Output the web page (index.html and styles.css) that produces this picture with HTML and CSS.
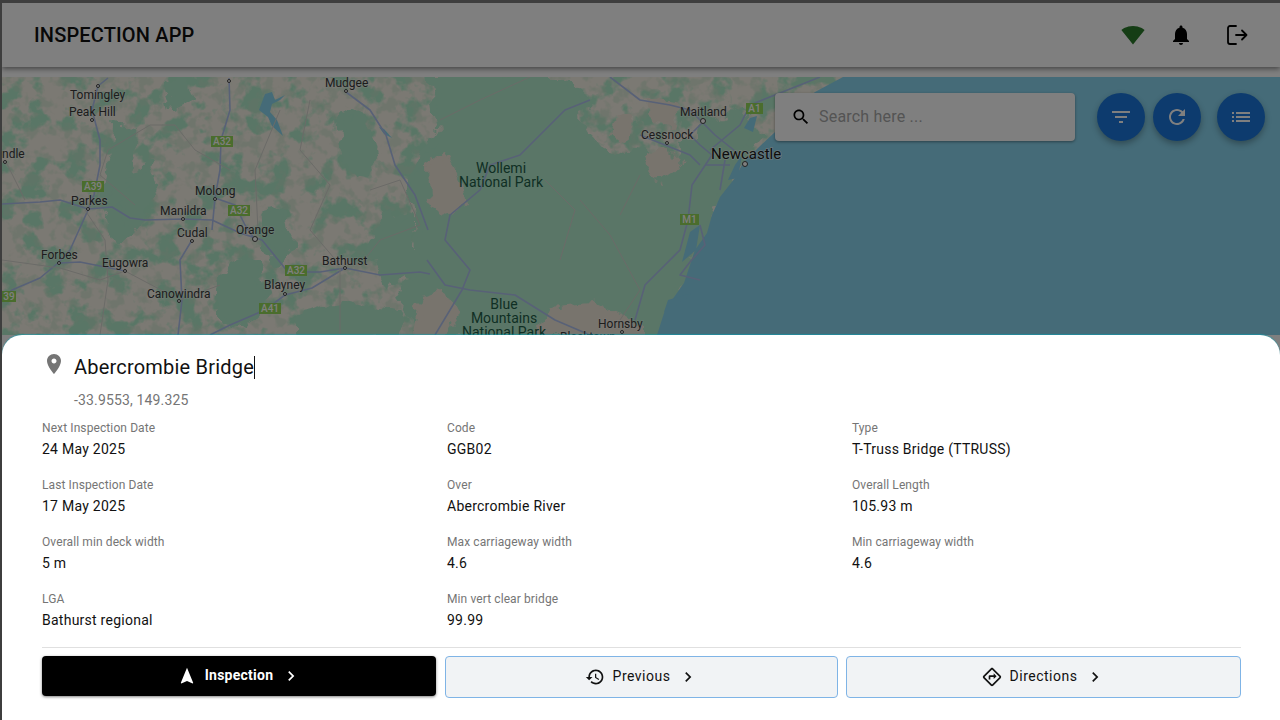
FILE: index.html
```html
<!DOCTYPE html>
<html lang="en">
<head>
    <meta charset="UTF-8">
    <meta name="viewport" content="width=device-width, initial-scale=1.0">
    <title>Inspection App</title>
    <link rel="stylesheet" href="styles.css">
</head>
<body>
<div class="app">
    <header class="topbar">
        <div class="brand">INSPECTION APP</div>
        <div class="topbar-icons">
            <svg class="icon-wifi" viewBox="0 0 24 24"><path d="M12.01 21.49L23.64 7c-.45-.34-4.93-4-11.64-4C5.28 3 .81 6.66.36 7l11.63 14.49.01.01.01-.01z"/></svg>
            <svg class="icon-bell" viewBox="0 0 24 24"><path d="M12 22c1.1 0 2-.9 2-2h-4c0 1.1.89 2 2 2zm6-6v-5c0-3.07-1.64-5.64-4.5-6.32V4c0-.83-.67-1.5-1.5-1.5s-1.5.67-1.5 1.5v.68C7.63 5.36 6 7.92 6 11v5l-2 2v1h16v-1l-2-2z"/></svg>
            <svg class="icon-logout" viewBox="0 0 24 24"><path d="M11 3H5a2 2 0 0 0-2 2v14a2 2 0 0 0 2 2h6"/><path d="M11 12h10.500M17 7.500l4.500 4.500-4.500 4.500"/></svg>
        </div>
    </header>

    <main class="map">
        <svg class="map-canvas" viewBox="2 77 1278 258" width="1278" height="258">
            <defs>
                <!-- patchy vegetation and wobbly edges -->
                <filter id="patches" x="0" y="0" width="100%" height="100%" color-interpolation-filters="sRGB">
                    <feTurbulence type="fractalNoise" baseFrequency="0.045" numOctaves="4" seed="11"/>
                    <feColorMatrix type="matrix" values="0 0 0 0 0.70  0 0 0 0 0.93  0 0 0 0 0.80  7 0 0 0 -3.5"/>
                </filter>
                <filter id="patches-fine" x="0" y="0" width="100%" height="100%" color-interpolation-filters="sRGB">
                    <feTurbulence type="fractalNoise" baseFrequency="0.08" numOctaves="3" seed="23"/>
                    <feColorMatrix type="matrix" values="0 0 0 0 0.78  0 0 0 0 0.90  0 0 0 0 0.80  6 0 0 0 -3"/>
                </filter>
                <filter id="wobble" x="-5%" y="-5%" width="110%" height="110%">
                    <feTurbulence type="fractalNoise" baseFrequency="0.06" numOctaves="3" seed="4" result="n"/>
                    <feDisplacementMap in="SourceGraphic" in2="n" scale="20" xChannelSelector="R" yChannelSelector="G"/>
                </filter>
            </defs>

            <rect x="2" y="77" width="1278" height="258" fill="#f7f2e6"/>
            <rect x="2" y="77" width="860" height="258" filter="url(#patches)"/>
            <rect x="2" y="77" width="860" height="258" filter="url(#patches-fine)" opacity="0.5"/>

            <!-- forest -->
            <g class="forest" filter="url(#wobble)">
                <path d="M432 77L560 77 590 100 575 118 610 160 640 150 660 180 700 130 740 110 760 135 735 165 718 200 700 240 680 285 657 335 430 335 400 300 420 240 410 180 440 130z"/>
                <path d="M115 125L135 130 128 190 135 225 118 240 105 200 112 160z"/>
                <path d="M128 172L150 168 155 190 140 215 130 235 122 205z"/>
                <path d="M262 215L285 210 290 250 275 265 262 240z"/>
                <path d="M340 110L365 120 375 160 360 175 345 160z"/>
                <path d="M385 215L410 220 410 270 385 285 370 250z"/>
                <path d="M230 265L255 260 265 295 245 325 220 315 220 285z"/>
                <path d="M300 315L350 305 400 315 395 335 300 335z"/>
                <path d="M165 85L186 80 190 100 172 108z"/>
            </g>
            <!-- bare land patches inside the park -->
            <g class="land" filter="url(#wobble)">
                <path d="M428 165L445 155 462 190 465 205 440 215 430 195z"/>
                <path d="M645 160L665 150 680 165 665 178 655 175z"/>
                <path d="M615 120L630 115 625 140 612 135z"/>
                <path d="M650 100L675 105 670 128 652 122z"/>
                <path d="M420 300L445 295 455 315 440 335 415 335z"/>
                <path d="M550 310L600 305 640 325 640 335 540 335z"/>
                <path d="M690 270L712 255 700 300 680 315z"/>
            </g>

            <!-- sea -->
            <path class="sea" d="M843 77L815 92 790 112 775 132 758 148 743 163 735 178 720 197 712 215 707 233 695 250 684 283 665 310 657 335 1280 335 1280 77z"/>
            <path class="sea" d="M690 232L700 225 696 250 682 262zM735 165L742 155 738 178 728 180zM750 118L757 116 753 132 744 128zM695 292L668 300 664 312 672 308z"/>
            <path class="sea" d="M265 94L272 92 275 100 285 95 280 100 272 104 270 112 277 120 283 136 272 126 268 117 259 110z"/>
            <path class="sea" d="M379 127L384 129 392 138 384 134z"/>

            <!-- roads -->
            <g class="roads">
                <path d="M108 78L98 86 92 110 100 140 100 165 94 195 88 210 70 250 58 263 40 278 12 290 2 298"/>
                <path d="M2 204L40 202 60 200 88 209 112 207 130 218 145 220 183 219 212 220 240 233 262 240 288 272 320 272 345 268 380 275 420 272 430 274"/>
                <path d="M229 78L230 110 221 140 220 170 215 198 212 230"/>
                <path d="M215 198L235 205 245 225 255 240"/>
                <path d="M346 92L370 110 386 135 395 165 415 195 428 230"/>
                <path d="M345 268L312 288 285 295 265 310 230 325 210 335"/>
                <path d="M192 240L180 260 182 300 178 335"/>
                <path d="M60 263L80 262 125 271"/>
                <path d="M610 77L640 100 670 105 690 110 715 135 740 155"/>
                <path d="M590 100L565 110 545 130 520 155 490 165 480 190 450 215 445 240 470 270 462 290 435 335"/>
                <path d="M427 260L445 285 470 290 515 295 555 320 590 335"/>
                <path d="M705 120L690 135 700 145 712 155M640 135L690 155 700 165"/>
                <path d="M712 155L692 185 688 220 680 250 665 265 645 285 635 320"/>
                <path d="M710 150L740 125 750 105 800 85 820 77"/>
                <path d="M705 165L730 165M725 160L720 190M700 225L705 245 690 262 680 275 700 280"/>
            </g>
            <g class="roads-thin">
                <path d="M135 205L100 175 108 150 150 125 175 125 195 150 230 170"/>
                <path d="M2 260L60 268 100 280 125 271 180 300 220 285"/>
                <path d="M310 100L300 150 330 185 310 230 340 265M280 110L255 170 258 230"/>
                <path d="M370 190L400 180 420 225 380 240 360 265"/>
                <path d="M580 200L610 235 640 290 620 320M545 180L575 210 560 260"/>
                <path d="M530 77L480 100 440 120M640 175L620 215"/>
                <path d="M5 160L25 200M85 210L105 240 108 280 100 335M340 268L340 335"/>
            </g>

            <!-- town dots -->
            <g class="dots">
                <circle cx="98" cy="86" r="1.500"/><circle cx="229" cy="81" r="1.500"/><circle cx="346" cy="91" r="1.500"/>
                <circle cx="92" cy="120" r="1.500"/><circle cx="5" cy="162" r="1.500"/><circle cx="88" cy="209" r="1.500"/>
                <circle cx="215" cy="199" r="1.500"/><circle cx="183" cy="219" r="1.500"/><circle cx="192" cy="241" r="1.500"/>
                <circle cx="255" cy="239" r="2.500"/><circle cx="59" cy="263" r="1.500"/><circle cx="125" cy="271" r="1.500"/>
                <circle cx="179" cy="301" r="1.500"/><circle cx="345" cy="268" r="1.500"/><circle cx="285" cy="294" r="1.500"/>
                <circle cx="703" cy="121" r="2.500"/><circle cx="667" cy="143" r="1.500"/><circle cx="745" cy="164" r="2.500"/>
                <circle cx="622" cy="332" r="1.500"/>
            </g>

            <!-- route shields -->
            <g class="shields">
                <g><rect x="211" y="136" width="22" height="11"/><text x="222" y="145">A32</text></g>
                <g><rect x="82" y="181" width="22" height="11"/><text x="93" y="190">A39</text></g>
                <g><rect x="228" y="205" width="22" height="11"/><text x="239" y="214">A32</text></g>
                <g><rect x="285" y="265" width="22" height="11"/><text x="296" y="274">A32</text></g>
                <g><rect x="259" y="303" width="22" height="11"/><text x="270" y="312">A41</text></g>
                <g><rect x="2" y="291" width="14" height="11"/><text x="9" y="300">39</text></g>
                <g><rect x="746" y="103" width="17" height="11"/><text x="754.500" y="112">A1</text></g>
                <g><rect x="680" y="214" width="19" height="11"/><text x="689.500" y="223">M1</text></g>
            </g>

            <!-- place names -->
            <g class="towns">
                <text x="325" y="87">Mudgee</text>
                <text x="70" y="99">Tomingley</text>
                <text x="69" y="116">Peak Hill</text>
                <text x="2" y="158">ndle</text>
                <text x="71" y="205">Parkes</text>
                <text x="195" y="195">Molong</text>
                <text x="160" y="215">Manildra</text>
                <text x="177" y="237">Cudal</text>
                <text x="236" y="234">Orange</text>
                <text x="41" y="259">Forbes</text>
                <text x="102" y="267">Eugowra</text>
                <text x="147" y="298">Canowindra</text>
                <text x="322" y="265">Bathurst</text>
                <text x="264" y="289">Blayney</text>
                <text x="680" y="116">Maitland</text>
                <text x="641" y="139">Cessnock</text>
                <text x="598" y="328">Hornsby</text>
                <text x="560" y="341">Blacktown</text>
            </g>
            <text class="city" x="711" y="159">Newcastle</text>
            <g class="parks">
                <text x="501" y="173">Wollemi</text>
                <text x="501" y="187">National Park</text>
                <text x="504" y="309">Blue</text>
                <text x="504" y="323">Mountains</text>
                <text x="504" y="337">National Park</text>
            </g>
        </svg>

        <div class="search">
            <svg viewBox="0 0 24 24"><path d="M15.5 14h-.79l-.28-.27C15.41 12.59 16 11.11 16 9.5 16 5.91 13.09 3 9.5 3S3 5.91 3 9.5 5.91 16 9.5 16c1.61 0 3.09-.59 4.23-1.57l.27.28v.79l5 4.99L20.49 19l-4.99-5zm-6 0C7.01 14 5 11.99 5 9.5S7.01 5 9.5 5 14 7.01 14 9.5 11.99 14 9.5 14z"/></svg>
            <span>Search here ...</span>
        </div>

        <div class="fabs">
            <div class="fab"><svg viewBox="0 0 24 24"><path d="M10 18h4v-2h-4v2zM3 6v2h18V6H3zm3 7h12v-2H6v2z"/></svg></div>
            <div class="fab"><svg viewBox="0 0 24 24"><path d="M17.65 6.35C16.2 4.9 14.21 4 12 4c-4.42 0-7.99 3.58-7.99 8s3.57 8 7.99 8c3.73 0 6.84-2.55 7.73-6h-2.08c-.82 2.33-3.04 4-5.65 4-3.31 0-6-2.69-6-6s2.69-6 6-6c1.66 0 3.14.69 4.22 1.78L13 11h7V4l-2.35 2.35z"/></svg></div>
            <div class="fab fab-list"><svg viewBox="0 0 24 24"><path d="M3 13h2v-2H3v2zm0 4h2v-2H3v2zm0-8h2V7H3v2zm4 4h14v-2H7v2zm0 4h14v-2H7v2zM7 7v2h14V7H7z"/></svg></div>
        </div>
    </main>

    <div class="scrim"></div>

    <section class="sheet">
        <div class="sheet-head">
            <svg viewBox="0 0 24 24"><path d="M12 2C8.13 2 5 5.13 5 9c0 5.25 7 13 7 13s7-7.75 7-13c0-3.87-3.13-7-7-7zm0 9.500c-1.380 0-2.500-1.120-2.500-2.500s1.120-2.500 2.500-2.500 2.500 1.120 2.500 2.500-1.120 2.500-2.500 2.500z"/></svg>
            <h1>Abercrombie Bridge</h1>
        </div>
        <p class="coords">-33.9553, 149.325</p>

        <div class="details">
            <div class="field"><label>Next Inspection Date</label><div>24 May 2025</div></div>
            <div class="field"><label>Code</label><div>GGB02</div></div>
            <div class="field"><label>Type</label><div>T-Truss Bridge (TTRUSS)</div></div>
            <div class="field"><label>Last Inspection Date</label><div>17 May 2025</div></div>
            <div class="field"><label>Over</label><div>Abercrombie River</div></div>
            <div class="field"><label>Overall Length</label><div>105.93 m</div></div>
            <div class="field"><label>Overall min deck width</label><div>5 m</div></div>
            <div class="field"><label>Max carriageway width</label><div>4.6</div></div>
            <div class="field"><label>Min carriageway width</label><div>4.6</div></div>
            <div class="field"><label>LGA</label><div>Bathurst regional</div></div>
            <div class="field"><label>Min vert clear bridge</label><div>99.99</div></div>
        </div>

        <div class="actions">
            <button class="btn btn-dark">
                <svg viewBox="0 0 24 24"><path d="M12 2L4.500 20.290l.71.71L12 18l6.790 3 .71-.71z"/></svg>
                <span>Inspection</span>
                <svg class="chevron" viewBox="0 0 24 24"><path d="M10 6L8.590 7.410 13.170 12l-4.580 4.590L10 18l6-6z"/></svg>
            </button>
            <button class="btn">
                <svg viewBox="0 0 24 24"><path d="M13 3c-4.970 0-9 4.030-9 9H1l3.890 3.890.07.14L9 12H6c0-3.870 3.130-7 7-7s7 3.130 7 7-3.130 7-7 7c-1.930 0-3.680-.79-4.940-2.060l-1.420 1.420C8.270 19.990 10.510 21 13 21c4.970 0 9-4.030 9-9s-4.030-9-9-9zm-1 5v5l4.280 2.540.72-1.210-3.500-2.080V8H12z"/></svg>
                <span>Previous</span>
                <svg class="chevron" viewBox="0 0 24 24"><path d="M10 6L8.590 7.410 13.170 12l-4.580 4.590L10 18l6-6z"/></svg>
            </button>
            <button class="btn">
                <svg viewBox="0 0 24 24"><path d="M22.430 10.590l-9.010-9.010c-.75-.75-2.070-.76-2.830 0l-9 9c-.78.78-.78 2.040 0 2.820l9 9c.39.39.9.58 1.410.58.51 0 1.020-.19 1.410-.58l8.990-8.990c.79-.76.8-2.020.03-2.820zm-10.420 10.400l-9-9 9-9 9 9-9 9zM8 11v4h2v-3h4v2.500l3.500-3.500L14 7.500V10H9c-.55 0-1 .45-1 1z"/></svg>
                <span>Directions</span>
                <svg class="chevron" viewBox="0 0 24 24"><path d="M10 6L8.590 7.410 13.170 12l-4.580 4.590L10 18l6-6z"/></svg>
            </button>
        </div>
    </section>
</div>
</body>
</html>
```

FILE: styles.css
```css
* {
    box-sizing: border-box;
}
html, body {
    margin: 0;
    height: 720px;
    overflow: hidden;
}
body {
    background: #3e3e3e;
    padding: 3px 0 0 2px;
    font-family: Roboto, "Liberation Sans", sans-serif;
}
.app {
    position: relative;
    width: 1278px;
    height: 717px;
    background: #fff;
    display: flex;
    flex-direction: column;
    overflow: hidden;
}

/* top bar */
.topbar {
    height: 64px;
    flex: none;
    background: #fff;
    display: flex;
    align-items: center;
    justify-content: space-between;
    padding: 0 31px 0 32px;
    box-shadow: 0 2px 5px rgba(0,0,0,0.45);
    position: relative;
    z-index: 1;
}
.brand {
    font-size: 20px;
    font-weight: 500;
    letter-spacing: 0.15px;
    color: #111;
}
.topbar-icons {
    display: flex;
    align-items: center;
    gap: 24px;
}
.topbar-icons svg {
    width: 24px;
    height: 24px;
    display: block;
}
.icon-wifi {
    fill: #2a7a2a;
}
.icon-bell {
    fill: #000;
}
.icon-logout {
    margin-left: 8px;
    fill: none;
    stroke: #000;
    stroke-width: 1.8;
    stroke-linecap: round;
    stroke-linejoin: round;
}

/* map */
.map {
    position: relative;
    flex: 1;
    margin-top: 10px;
    overflow: hidden;
}
.map-canvas {
    display: block;
    font-family: Roboto, "Liberation Sans", sans-serif;
}
.forest path {
    fill: #b4eccf;
    stroke: #b4eccf;
    stroke-width: 6;
    stroke-linejoin: round;
}
.land path {
    fill: #f0e8da;
    stroke: #f0e8da;
    stroke-width: 4;
    stroke-linejoin: round;
}
.sea {
    fill: #8ad6f0;
}
.roads path {
    fill: none;
    stroke: #b0c2ee;
    stroke-width: 1.6;
    stroke-linejoin: round;
}
.roads-thin path {
    fill: none;
    stroke: #d6d6d0;
    stroke-width: 1;
    stroke-linejoin: round;
}
.dots circle {
    fill: #fff;
    stroke: #444;
    stroke-width: 1;
}
.shields rect {
    fill: #94da5a;
}
.shields text {
    font-size: 10px;
    font-weight: 500;
    fill: #fff;
    text-anchor: middle;
}
.towns text {
    font-size: 12px;
    fill: #3a3a3a;
    paint-order: stroke;
    stroke: rgba(255,255,255,0.35);
    stroke-width: 1.5px;
}
.city {
    font-size: 15px;
    fill: #1a1a1a;
    paint-order: stroke;
    stroke: rgba(255,255,255,0.6);
    stroke-width: 1.5px;
}
.parks text {
    font-size: 14px;
    fill: #1f5f48;
    text-anchor: middle;
}

/* things sitting on the map */
.search {
    position: absolute;
    left: 773px;
    top: 16px;
    width: 300px;
    height: 48px;
    background: #fff;
    border-radius: 4px;
    box-shadow: 0 1px 3px rgba(0,0,0,0.4);
    display: flex;
    align-items: center;
    padding-left: 16px;
    gap: 8px;
    font-size: 16px;
    letter-spacing: 0.2px;
    color: #a8a8a8;
}
.search svg {
    width: 20px;
    height: 20px;
    fill: #000;
}
.search span {
    padding-bottom: 2px;
}
.fabs {
    position: absolute;
    left: 1095px;
    top: 16px;
    display: flex;
    gap: 8px;
}
.fab {
    width: 48px;
    height: 48px;
    border-radius: 50%;
    background: #1a76dc;
    box-shadow: 0 3px 6px rgba(0,0,0,0.3);
    display: flex;
    align-items: center;
    justify-content: center;
}
.fab svg {
    width: 24px;
    height: 24px;
    fill: #fff;
}
.fab-list {
    margin-left: 8px;
}

.scrim {
    position: absolute;
    inset: 0;
    background: rgba(0,0,0,0.5);
    z-index: 2;
}

/* bottom sheet */
.sheet {
    position: absolute;
    left: 0;
    right: 0;
    bottom: 0;
    height: 385px;
    z-index: 3;
    background: #fff;
    border-radius: 20px 20px 0 0;
    box-shadow: 0 -1px 1px rgba(0,170,190,0.5);
    padding: 17px 39px 0 40px;
}
.sheet-head {
    display: flex;
    gap: 8px;
}
.sheet-head svg {
    width: 24px;
    height: 24px;
    flex: none;
    fill: #757575;
}
.sheet-head h1 {
    margin: 4px 0 0;
    font-size: 20px;
    font-weight: 400;
    line-height: 23px;
    letter-spacing: 0.2px;
    color: #111;
    border-right: 1px solid #111;
}
.coords {
    margin: 11px 0 0 32px;
    font-size: 14px;
    line-height: 20px;
    letter-spacing: 0.15px;
    color: #757575;
}
.details {
    margin-top: 10px;
    display: grid;
    grid-template-columns: 405px 405px 1fr;
    row-gap: 18px;
}
.field label {
    display: block;
    font-size: 12px;
    line-height: 16px;
    letter-spacing: 0.1px;
    color: #757575;
    margin-bottom: 3px;
}
.field div {
    font-size: 14px;
    line-height: 20px;
    letter-spacing: 0.25px;
    color: #111;
}
.actions {
    margin-top: 17px;
    border-top: 1px solid #e0e0e0;
    padding-top: 8px;
    display: grid;
    grid-template-columns: 395px 393px 395px;
    align-items: start;
    gap: 8px;
}
.btn {
    height: 42px;
    background: #f1f3f5;
    border: 1px solid #7fb4e6;
    border-radius: 4px;
    display: flex;
    align-items: center;
    justify-content: center;
    gap: 8px;
    font-family: inherit;
    font-size: 14px;
    font-weight: 400;
    letter-spacing: 0.5px;
    color: #111;
    padding: 0;
}
.btn span {
    padding-bottom: 2px;
}
.btn svg {
    width: 20px;
    height: 20px;
    fill: #111;
}
.btn-dark {
    height: 40px;
    margin-right: 1px;
    background: #000;
    border: none;
    color: #fff;
    font-weight: 700;
    letter-spacing: 0.25px;
    box-shadow: 0 1px 3px rgba(0,0,0,0.5);
}
.btn-dark svg {
    fill: #fff;
}
```
